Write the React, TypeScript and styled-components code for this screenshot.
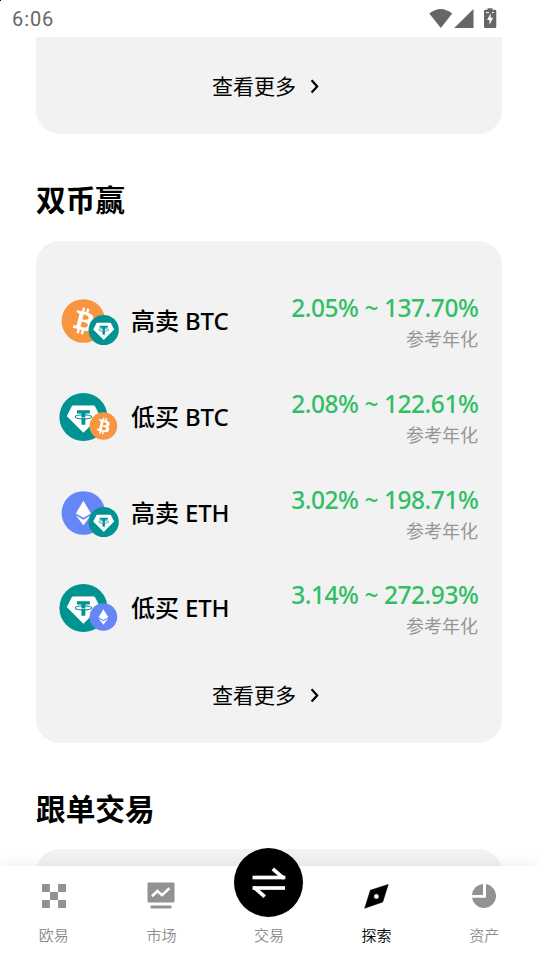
import React from 'react';
import styled, { createGlobalStyle } from 'styled-components';

const GlobalStyle = createGlobalStyle`
  * { box-sizing: border-box; }
  html, body { margin: 0; padding: 0; background: #fff; overflow: hidden; }
  body { font-family: "Noto Sans", "Noto Sans CJK SC", sans-serif; color: #000; }
  svg { display: block; flex: none; }
`;

const Screen = styled.div`
  position: relative;
  width: 538px;
  height: 956px;
  display: flex;
  flex-direction: column;
  overflow: hidden;
  background: #fff;
`;

const CornerDot = styled.i`
  position: absolute;
  left: 0;
  top: 0;
  width: 1px;
  height: 1px;
  background: #000;
`;

const StatusBar = styled.header`
  flex: none;
  height: 37px;
  padding: 0 41px 2px 12px;
  display: flex;
  align-items: center;
  justify-content: space-between;
`;

const Clock = styled.span`
  font: 400 20px/24px Roboto, sans-serif;
  letter-spacing: 0.9px;
  color: #666;
  margin-top: 2px;
`;

const Content = styled.main`
  flex: 1;
  min-height: 0;
  overflow: hidden;
  padding: 0 36px;
`;

const Card = styled.section<{ $height: number; $part?: 'top' | 'bottom' }>`
  height: ${p => p.$height}px;
  display: flex;
  flex-direction: column;
  background: #f2f2f2;
  border-radius: ${p => (p.$part === 'bottom' ? '0 0 24px 24px' : p.$part === 'top' ? '24px 24px 0 0' : '24px')};
  padding-top: ${p => (p.$part ? 0 : 32.3)}px;
`;

const Title = styled.h2<{ $height: number }>`
  margin: 0;
  height: ${p => p.$height}px;
  padding-top: 43px;
  font: 700 29.7px/44px "Noto Sans CJK SC", sans-serif;
`;

const More = styled.a<{ $height: number }>`
  height: ${p => p.$height}px;
  display: flex;
  align-items: center;
  justify-content: center;
  gap: 14px;
  padding: 0 6px 0 0;
  font: 400 21px/30px "Noto Sans CJK SC", sans-serif;
`;

const MoreLabel = styled.span`
  padding-bottom: 2px;
`;

const Row = styled.div`
  height: 95.7px;
  padding: 0 24px 0 22px;
  display: flex;
  align-items: center;
`;

const Name = styled.span`
  flex: 1;
  margin-left: 11px;
  font: 500 24px/32px "Noto Sans", "Noto Sans CJK SC", sans-serif;
  letter-spacing: -0.1px;
  white-space: nowrap;
`;

const Yield = styled.div`
  padding-top: 2px;
  text-align: right;
  white-space: nowrap;
`;

const Rate = styled.div`
  font: 500 24.5px/32px "Noto Sans", sans-serif;
  letter-spacing: -0.45px;
  margin-right: -0.4px;
  color: #31bf66;
`;

const Caption = styled.div`
  font: 400 18px/28px "Noto Sans CJK SC", sans-serif;
  color: #969696;
`;

const TabBar = styled.nav`
  flex: none;
  position: relative;
  height: 90px;
  display: grid;
  grid-template-columns: repeat(5, 1fr);
  background: #fff;
  box-shadow: 0 -2px 14px rgba(0, 0, 0, 0.07);
`;

const Tab = styled.a<{ $active?: boolean }>`
  display: flex;
  flex-direction: column;
  align-items: center;
  color: ${p => (p.$active ? '#000' : '#8c8c8c')};
  font: 350 15px/22px "Noto Sans CJK SC", sans-serif;
`;

const TabIcon = styled.span`
  height: 58px;
  display: flex;
  align-items: center;
  padding-top: 2px;
`;

const TradeButton = styled.span`
  width: 69px;
  height: 69px;
  margin: -18px 0 7px;
  display: flex;
  align-items: center;
  justify-content: center;
  border-radius: 50%;
  background: #000;
`;

type Coin = 'btc' | 'eth' | 'usdt';

const coinColor: Record<Coin, string> = { btc: '#f79540', eth: '#6685f7', usdt: '#009392' };

const CoinGlyph = ({ coin }: { coin: Coin }) => {
  if (coin === 'btc')
    return (
      <path
        fill="#fff"
        fillRule="evenodd"
        transform="translate(-16 -16)"
        d="M23.189 14.02c.314-2.096-1.283-3.223-3.465-3.975l.708-2.84-1.728-.43-.69 2.765c-.454-.114-.92-.22-1.385-.326l.695-2.783L15.596 6l-.708 2.839c-.376-.086-.746-.17-1.104-.26l.002-.009-2.384-.595-.46 1.846s1.283.294 1.256.312c.7.175.826.638.805 1.006l-.806 3.235c.048.012.11.03.18.057l-.183-.045-1.13 4.532c-.086.212-.303.531-.793.41.018.025-1.256-.313-1.256-.313l-.858 1.978 2.25.561c.418.105.828.215 1.231.318l-.715 2.872 1.727.43.708-2.84c.472.127.93.245 1.378.357l-.706 2.828 1.728.43.715-2.866c2.948.558 5.164.333 6.097-2.333.752-2.146-.037-3.385-1.588-4.192 1.13-.26 1.98-1.003 2.207-2.538zm-3.95 5.538c-.533 2.147-4.148.986-5.32.695l.95-3.805c1.172.293 4.929.872 4.37 3.11zm.535-5.569c-.487 1.953-3.495.96-4.47.717l.86-3.45c.975.243 4.118.696 3.61 2.733z"
      />
    );
  if (coin === 'eth')
    return (
      <g fill="#fff">
        <path d="M0-8.9 5.6.4 0 3.5-5.6.4Z" />
        <path d="M-5.6 1.7 0 4.9 5.6 1.7 0 8.9Z" />
      </g>
    );
  return (
    <g>
      <path fill="#fff" stroke="#fff" strokeWidth="0.6" strokeLinejoin="round" d="M-7.3-7.4H7.3L10.8-.6 0 10.2-10.8-.6Z" />
      <path fill={coinColor.usdt} d="M-4.3-4.5H4.3V-2.3H1.3V.4H-1.3V-2.3H-4.3ZM-1.3.9H1.3V5.1H-1.3Z" />
      <ellipse cx="0" cy="-0.1" rx="5.4" ry="1.4" fill="none" stroke={coinColor.usdt} strokeWidth="0.8" />
    </g>
  );
};

const Disc = ({ coin, x, y, r }: { coin: Coin; x: number; y: number; r: number }) => (
  <g transform={`translate(${x} ${y}) scale(${r / 16})`}>
    <circle r="16" fill={coinColor[coin]} />
    <CoinGlyph coin={coin} />
  </g>
);

const CoinPair = ({ base, badge }: { base: Coin; badge: Coin }) => (
  <svg width="62" height="50" viewBox="0 0 62 50">
    <Disc coin={base} x={25.4} y={25} r={base === 'usdt' ? 24 : 21.8} />
    <Disc coin={badge} x={badge === 'usdt' ? 45.7 : 45.4} y={34} r={badge === 'usdt' ? 15.1 : 13.8} />
  </svg>
);

const Chevron = () => (
  <svg width="10" height="16" viewBox="0 0 10 16">
    <path d="M1.600 2.200 7.200 8.400 1.600 14.600" fill="none" stroke="#000" strokeWidth="2.200" />
  </svg>
);

const StatusIcons = () => (
  <svg width="68" height="22" viewBox="429 6 68 22" fill="#666">
    <path d="M429.3 12.6Q440.7 3.4 452.2 12.6L440.8 27Z" />
    <path d="M473.5 8V27H454.2Z" />
    <path d="M487.5 7.2h5v1.6h2.5a1.3 1.3 0 0 1 1.3 1.3v15.6a1.3 1.3 0 0 1-1.3 1.3H485.3a1.3 1.3 0 0 1-1.3-1.3V10.1a1.3 1.3 0 0 1 1.3-1.3h2.2Z" />
    <path fill="#fff" d="M490.7 12.2V16.7H493.2L489.5 23.8V18.9H487.1Z" />
    <path d="M486 11.6h3M492 11.4h2" stroke="#fff" strokeWidth="1" />
  </svg>
);

const HomeIcon = () => (
  <svg width="24" height="24" viewBox="0 0 24 24">
    <path fill="#929292" d="M0 0h7.9v7.9H0ZM16.1 0H24v7.9h-7.9ZM8 8h8v8H8ZM0 16.1h7.9V24H0ZM16.1 16.1H24V24h-7.9Z" />
  </svg>
);

const MarketIcon = () => (
  <svg width="28" height="28" viewBox="0 0 28 28">
    <rect x="0.5" y="0.6" width="27" height="20" rx="1" fill="#929292" />
    <path d="M5 14.3 10.5 9.1 15 13.1 22.5 6.3" fill="none" stroke="#fff" strokeWidth="2.6" />
    <rect x="3.5" y="23.4" width="21" height="3" rx="1" fill="#929292" />
  </svg>
);

const SwapIcon = () => (
  <svg width="34" height="32" viewBox="0 0 34 32" fill="none" stroke="#fff" strokeWidth="3.7">
    <path d="M0.5 10.5H32" />
    <path d="M20.8 1.8 31.5 11.1" />
    <path d="M1.5 21H33" />
    <path d="M2 20.4 12.7 29.7" />
    <path d="M29.5 8.8H33.4V12.3H30ZM0.5 19.2H4V22.8H0.5Z" fill="#fff" stroke="none" />
  </svg>
);

const CompassIcon = () => (
  <svg width="25" height="25" viewBox="0 0 25 25">
    <path
      fill="#000"
      fillRule="evenodd"
      stroke="#000"
      strokeWidth="0.6"
      strokeLinejoin="round"
      d="M24.2.5 18.7 18 .7 24.2 6.4 6.3ZM12.4 9.8A2.6 2.6 0 1 0 12.4 15 2.6 2.6 0 1 0 12.4 9.8Z"
    />
  </svg>
);

const AssetsIcon = () => (
  <svg width="24" height="24" viewBox="0 0 24 24" fill="#929292">
    <path d="M11 0V10.9H0A11.7 11.7 0 0 1 11 0Z" />
    <path d="M14 0A12.1 12.1 0 1 1 0 13.7H14Z" />
  </svg>
);

const products: { name: string; rate: string; base: Coin; badge: Coin }[] = [
  { name: '高卖 BTC', rate: '2.05% ~ 137.70%', base: 'btc', badge: 'usdt' },
  { name: '低买 BTC', rate: '2.08% ~ 122.61%', base: 'usdt', badge: 'btc' },
  { name: '高卖 ETH', rate: '3.02% ~ 198.71%', base: 'eth', badge: 'usdt' },
  { name: '低买 ETH', rate: '3.14% ~ 272.93%', base: 'usdt', badge: 'eth' },
];

export default function App() {
  return (
    <Screen>
      <GlobalStyle />
      <StatusBar>
        <Clock>6:06</Clock>
        <StatusIcons />
      </StatusBar>
      <Content>
        <Card $height={97} $part="bottom">
          <More $height={99}><MoreLabel>查看更多</MoreLabel><Chevron /></More>
        </Card>
        <Title $height={107}>双币赢</Title>
        <Card $height={502}>
          {products.map(p => (
            <Row key={p.name}>
              <CoinPair base={p.base} badge={p.badge} />
              <Name>{p.name}</Name>
              <Yield>
                <Rate>{p.rate}</Rate>
                <Caption>参考年化</Caption>
              </Yield>
            </Row>
          ))}
          <More $height={78}><MoreLabel>查看更多</MoreLabel><Chevron /></More>
        </Card>
        <Title $height={106}>跟单交易</Title>
        <Card $height={120} $part="top" />
      </Content>
      <TabBar>
        <Tab><TabIcon><HomeIcon /></TabIcon>欧易</Tab>
        <Tab><TabIcon><MarketIcon /></TabIcon>市场</Tab>
        <Tab><TradeButton><SwapIcon /></TradeButton>交易</Tab>
        <Tab $active><TabIcon><CompassIcon /></TabIcon>探索</Tab>
        <Tab><TabIcon><AssetsIcon /></TabIcon>资产</Tab>
      </TabBar>
      <CornerDot />
    </Screen>
  );
}
